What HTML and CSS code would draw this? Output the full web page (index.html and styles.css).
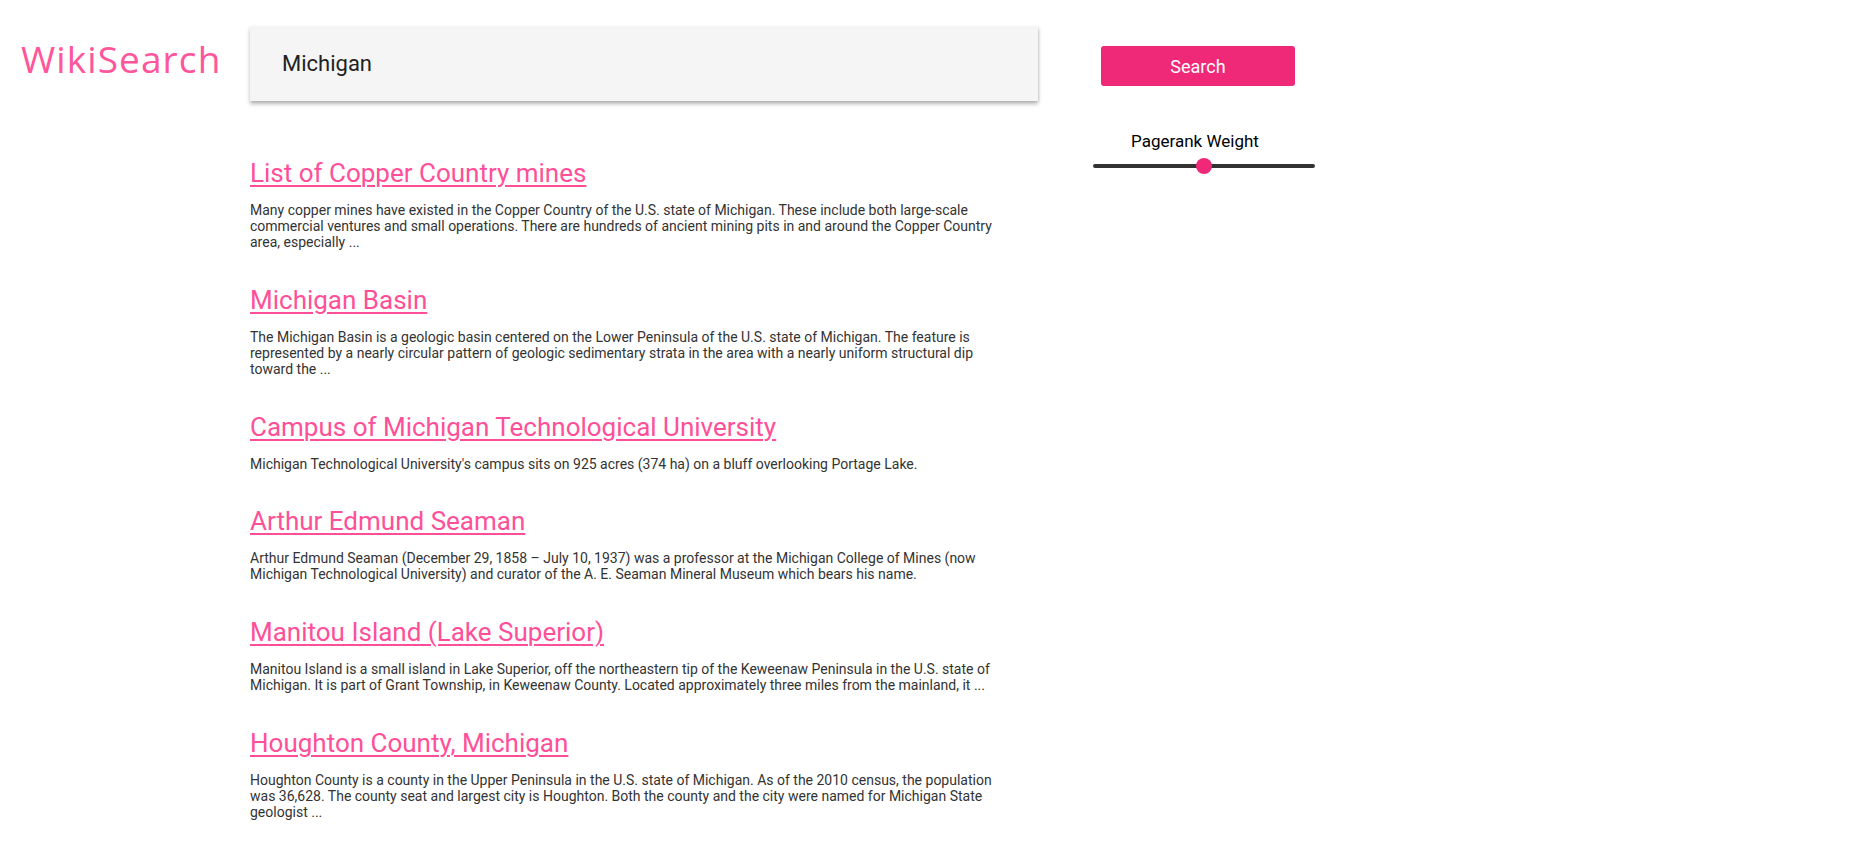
FILE: index.html
```html
<!DOCTYPE html>
<html lang="en">
<head>
<meta charset="utf-8">
<title>WikiSearch</title>
<link rel="stylesheet" href="styles.css">
</head>
<body>
<div class="page">
  <div class="brand">WikiSearch</div>
  <main class="main">
    <div class="searchbox"><input class="query" type="text" value="Michigan"></div>
    <div class="results">
      <article class="result">
        <h2 class="title"><a href="#">List of Copper Country mines</a></h2>
        <p class="snippet">Many copper mines have existed in the Copper Country of the U.S. state of Michigan. These include both large-scale commercial ventures and small operations. There are hundreds of ancient mining pits in and around the Copper Country area, especially ...</p>
      </article>
      <article class="result">
        <h2 class="title"><a href="#">Michigan Basin</a></h2>
        <p class="snippet">The Michigan Basin is a geologic basin centered on the Lower Peninsula of the U.S. state of Michigan. The feature is represented by a nearly circular pattern of geologic sedimentary strata in the area with a nearly uniform structural dip toward the ...</p>
      </article>
      <article class="result">
        <h2 class="title"><a href="#">Campus of Michigan Technological University</a></h2>
        <p class="snippet">Michigan Technological University's campus sits on 925 acres (374 ha) on a bluff overlooking Portage Lake.</p>
      </article>
      <article class="result">
        <h2 class="title"><a href="#">Arthur Edmund Seaman</a></h2>
        <p class="snippet">Arthur Edmund Seaman (December 29, 1858 – July 10, 1937) was a professor at the Michigan College of Mines (now Michigan Technological University) and curator of the A. E. Seaman Mineral Museum which bears his name.</p>
      </article>
      <article class="result">
        <h2 class="title"><a href="#">Manitou Island (Lake Superior)</a></h2>
        <p class="snippet">Manitou Island is a small island in Lake Superior, off the northeastern tip of the Keweenaw Peninsula in the U.S. state of Michigan. It is part of Grant Township, in Keweenaw County. Located approximately three miles from the mainland, it ...</p>
      </article>
      <article class="result">
        <h2 class="title"><a href="#">Houghton County, Michigan</a></h2>
        <p class="snippet">Houghton County is a county in the Upper Peninsula in the U.S. state of Michigan. As of the 2010 census, the population was 36,628. The county seat and largest city is Houghton. Both the county and the city were named for Michigan State geologist ...</p>
      </article>
    </div>
  </main>
  <aside class="side">
    <button class="search-btn" type="button">Search</button>
    <div class="weight-label">Pagerank Weight</div>
    <input class="weight" type="range" min="0" max="100" value="50">
  </aside>
</div>
</body>
</html>
```

FILE: styles.css
```css
html, body {
  margin: 0;
  padding: 0;
  background: #ffffff;
  overflow: hidden;
}

body {
  font-family: Roboto, "Liberation Sans", Arial, sans-serif;
  color: #333333;
}

.page {
  display: flex;
  align-items: flex-start;
}

.brand {
  width: 229px;
  padding-left: 21px;
  padding-top: 33px;
  font-family: "Open Sans", "Liberation Sans", sans-serif;
  font-weight: 400;
  font-size: 37px;
  letter-spacing: 1.1px;
  line-height: normal;
  color: #ff559b;
  white-space: nowrap;
}

.main {
  width: 788px;
  padding-top: 26px;
}

.searchbox {
  height: 75px;
  background: #f5f5f5;
  box-shadow: 0 3px 4px rgba(0, 0, 0, 0.28), 1px 1px 2px rgba(0, 0, 0, 0.08);
  display: flex;
  align-items: center;
}

.query {
  border: none;
  outline: none;
  background: transparent;
  font-family: Roboto, "Liberation Sans", sans-serif;
  font-size: 22px;
  color: #222222;
  padding: 0 0 0 32px;
  width: 700px;
}

.results {
  margin-top: 57px;
  width: 762px;
  display: flex;
  flex-direction: column;
  gap: 34.8px;
}

.title {
  margin: 0 0 14px;
  font-size: 26px;
  font-weight: 400;
  line-height: 30px;
}

.title a {
  color: #ff4f98;
  text-decoration: underline;
  text-decoration-thickness: 2px;
  text-underline-offset: 3px;
}

.snippet {
  margin: 0;
  font-size: 14px;
  line-height: normal;
  color: #333333;
}

.side {
  margin-left: 55px;
  width: 222px;
  padding-top: 46px;
  display: flex;
  flex-direction: column;
}

.search-btn {
  margin-left: 8px;
  width: 194px;
  height: 40px;
  border: none;
  border-radius: 3px;
  background: #ef2878;
  color: #ffffff;
  font-family: Roboto, "Liberation Sans", sans-serif;
  font-size: 18px;
  padding: 0;
}

.weight-label {
  margin-top: 45px;
  margin-left: 8px;
  width: 188px;
  text-align: center;
  font-size: 17px;
  color: #000000;
}

.weight {
  -webkit-appearance: none;
  appearance: none;
  margin: 7px 0 0;
  width: 222px;
  height: 16px;
  background: transparent;
}

.weight::-webkit-slider-runnable-track {
  height: 4px;
  border-radius: 2px;
  background: #333333;
}

.weight::-webkit-slider-thumb {
  -webkit-appearance: none;
  appearance: none;
  width: 16px;
  height: 16px;
  border-radius: 50%;
  background: #ef2878;
  margin-top: -6px;
  border: none;
}
```
